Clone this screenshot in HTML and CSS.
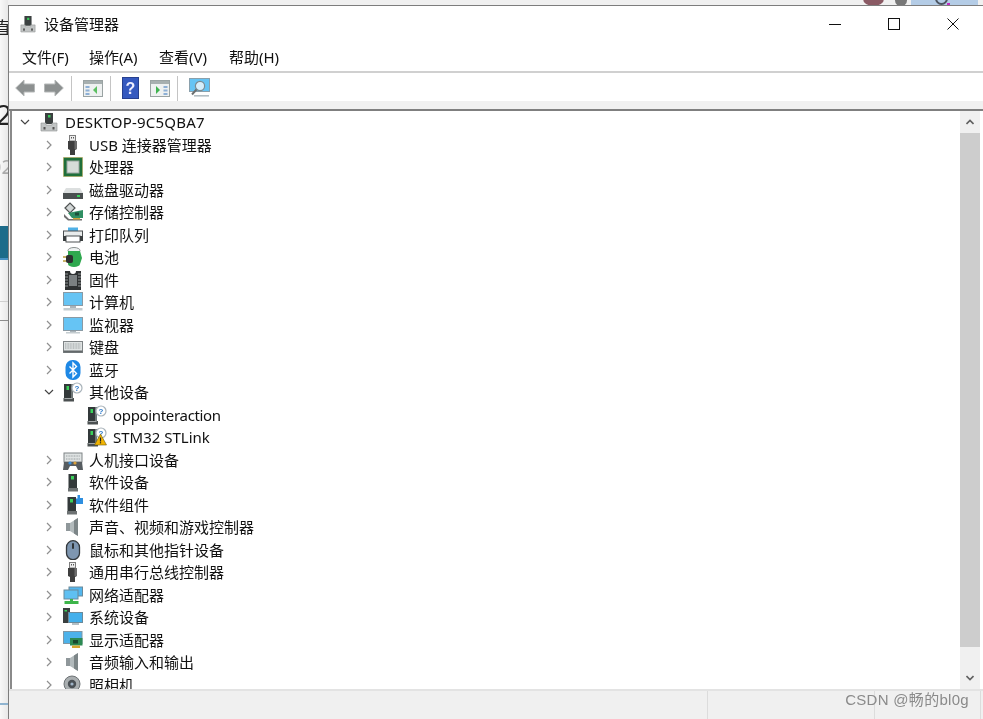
FILE: index.html
```html
<!DOCTYPE html>
<html lang="zh-CN">
<head>
<meta charset="utf-8">
<title>设备管理器</title>
<link rel="stylesheet" href="styles.css">
</head>
<body>
<svg class="defs" width="0" height="0" aria-hidden="true">
  <defs>
    <symbol id="i-tower" viewBox="0 0 20 20"><rect x="1" y="2" width="9" height="14" fill="#33393a"/><rect x="8" y="2" width="2" height="14" fill="#6e7677"/><rect x="3.5" y="4" width="2.5" height="4" fill="#3bd15a"/><rect x=".5" y="16" width="10.5" height="3.5" fill="#4b5051"/><rect x="1.5" y="16" width="8" height="1" fill="#a4a9aa"/></symbol>
    <symbol id="i-q" viewBox="0 0 20 20"><use href="#i-tower" width="20" height="20"/><circle cx="14" cy="6" r="5" fill="#fff" stroke="#a9b3ba" stroke-width="1.2"/><text x="14" y="9" font-size="8" font-weight="700" text-anchor="middle" fill="#2b78c9" font-family="Liberation Sans">?</text></symbol>
    <symbol id="i-usb" viewBox="0 0 20 20"><rect x="6.5" y="0.5" width="6" height="5.5" fill="#eee" stroke="#7d7d7d"/><rect x="8" y="2" width="1" height="1.5" fill="#555"/><rect x="10" y="2" width="1" height="1.5" fill="#555"/><path d="M5 6h9v8l-2 1v5H7v-5l-2-1z" fill="#3e3e3e"/><rect x="11.5" y="6" width="2.5" height="8" fill="#6c6c6c"/></symbol>
    <symbol id="i-speaker" viewBox="0 0 20 20"><rect x="3" y="6" width="4" height="8" fill="#8f979a"/><path d="M7 6l8-5v18l-8-5z" fill="#b2babc"/><path d="M11 3.5v13l4 2.5V1z" fill="#7d8688"/></symbol>
    <symbol id="i-monitor" viewBox="0 0 20 20"><rect x="0.5" y=".5" width="19" height="13" fill="#66c4f4" stroke="#8a9aa4"/><rect x="7" y="14" width="6" height="2" fill="#aab4ba"/><rect x="0.5" y="16" width="19" height="2.5" fill="#c4ccd0"/></symbol>
    <symbol id="i-root" viewBox="0 0 18 20"><rect x="5" y="1" width="8" height="11" fill="#3b4040"/><rect x="8" y="3" width="2.5" height="2.5" fill="#39c95a"/><path d="M1 11h5v2h6v-2h5v8H1z" fill="#c2c5c5" stroke="#8d9090" stroke-width=".6"/><rect x="3.5" y="15" width="2" height="2.5" fill="#555"/><rect x="12.5" y="15" width="2" height="2.5" fill="#555"/></symbol>
    <symbol id="c-r" viewBox="0 0 12 12"><path d="M4 2l4 4-4 4"/></symbol>
    <symbol id="c-d" viewBox="0 0 12 12"><path d="M2 4l4 4 4-4"/></symbol>
  </defs>
</svg>

<div class="backdrop">
  <span class="bg-char bg-char-a">直</span>
  <span class="bg-char bg-char-b">2</span>
  <span class="bg-char bg-char-c">02</span>
  <div class="bg-teal"></div>
  <div class="bg-rule bg-rule-a"></div>
  <div class="bg-rule bg-rule-b"></div>
  <div class="bg-rule bg-rule-c"></div>
  <div class="bg-avatar"></div>
  <div class="bg-dot"></div>
  <div class="bg-tile"></div>
  <div class="bg-ring"></div>
  <div class="bg-magenta"></div>
</div>

<main class="window">
  <header class="titlebar">
    <svg class="title-icon" viewBox="0 0 18 20"><use href="#i-root"/></svg>
    <span class="title-text">设备管理器</span>
    <div class="window-controls">
      <button class="win-btn" aria-label="最小化"><svg width="12" height="12" viewBox="0 0 12 12"><path d="M0 6.5h12" stroke="#111" fill="none"/></svg></button>
      <button class="win-btn" aria-label="最大化"><svg width="12" height="12" viewBox="0 0 12 12"><rect x=".5" y=".5" width="11" height="11" stroke="#111" fill="none"/></svg></button>
      <button class="win-btn" aria-label="关闭"><svg width="12" height="12" viewBox="0 0 12 12"><path d="M.5.5l11 11M11.5.5l-11 11" stroke="#111" fill="none"/></svg></button>
    </div>
  </header>

  <nav class="menubar">
    <span class="menu-item">文件(F)</span>
    <span class="menu-item">操作(A)</span>
    <span class="menu-item">查看(V)</span>
    <span class="menu-item">帮助(H)</span>
  </nav>

  <div class="toolbar">
    <svg class="tool tool-arrow" viewBox="0 0 20 18"><path d="M.7 9L9 1v4h10.5v8H9v4z" fill="#8c9090" stroke="#b5b8b8"/></svg>
    <svg class="tool tool-arrow tool-arrow-r" viewBox="0 0 20 18"><path d="M19.3 9L11 1v4H.5v8H11v4z" fill="#8c9090" stroke="#b5b8b8"/></svg>
    <span class="tool-sep"></span>
    <svg class="tool tool-pane" viewBox="0 0 20 17"><rect x=".5" y=".5" width="19" height="16" fill="#eef1f1" stroke="#9aa3a3"/><rect x="1" y="1" width="18" height="3" fill="#a7b0b0"/><rect x="2.5" y="6" width="4" height="2" fill="#8db0d6"/><rect x="2.5" y="9.5" width="4" height="2" fill="#8db0d6"/><rect x="2.5" y="13" width="4" height="2" fill="#8db0d6"/><path d="M14 6v8l-4-4z" fill="#5cc062"/></svg>
    <span class="tool-sep"></span>
    <svg class="tool tool-help" viewBox="0 0 17 22"><rect width="17" height="22" fill="#27408f"/><rect x="1" y="1" width="15" height="20" fill="#3559bf"/><text x="8.5" y="16.5" font-size="16" font-weight="700" text-anchor="middle" fill="#eef" font-family="Liberation Sans">?</text></svg>
    <svg class="tool tool-pane tool-pane-b" viewBox="0 0 20 17"><rect x=".5" y=".5" width="19" height="16" fill="#eef1f1" stroke="#9aa3a3"/><rect x="1" y="1" width="18" height="3" fill="#a7b0b0"/><rect x="13.5" y="6" width="4" height="2" fill="#8db0d6"/><rect x="13.5" y="9.5" width="4" height="2" fill="#8db0d6"/><rect x="13.5" y="13" width="4" height="2" fill="#8db0d6"/><path d="M6 6v8l4-4z" fill="#3fb34f"/></svg>
    <span class="tool-sep"></span>
    <svg class="tool tool-scan" viewBox="0 0 21 20"><rect x=".5" y=".5" width="20" height="13" fill="#66c4f4" stroke="#8aa0ac"/><circle cx="11" cy="8" r="4.6" fill="#d6eefb" stroke="#7d8b92" stroke-width="1.2"/><path d="M7.5 11.5L3 16.5" stroke="#6b6f70" stroke-width="2"/><rect x="5" y="17" width="15" height="1.6" fill="#b4bec3"/></svg>
  </div>
  <div class="toolbar-foot"></div>

  <div class="content">
    <ul class="tree">
      <li class="row lvl0"><svg class="chev chev-open"><use href="#c-d"/></svg><svg class="ico" viewBox="0 0 18 20"><use href="#i-root"/></svg><span class="label label-caps">DESKTOP-9C5QBA7</span></li>

      <li class="row lvl1"><svg class="chev"><use href="#c-r"/></svg><svg class="ico" viewBox="0 0 20 20"><use href="#i-usb"/></svg><span class="label">USB 连接器管理器</span></li>

      <li class="row lvl1"><svg class="chev"><use href="#c-r"/></svg><svg class="ico" viewBox="0 0 20 20"><rect x=".5" y=".5" width="19" height="19" fill="#1f6f3a" stroke="#b8a24a" stroke-dasharray="1 1"/><rect x="4" y="4" width="12" height="12" fill="#d6dcd8" stroke="#9aa5a0"/></svg><span class="label">处理器</span></li>

      <li class="row lvl1"><svg class="chev"><use href="#c-r"/></svg><svg class="ico" viewBox="0 0 20 20"><path d="M3 8h14l3 5H0z" fill="#dcdfdf"/><rect x="0" y="13" width="20" height="6" fill="#4a4f50"/><rect x="14" y="15" width="3" height="2" fill="#3bd15a"/></svg><span class="label">磁盘驱动器</span></li>

      <li class="row lvl1"><svg class="chev"><use href="#c-r"/></svg><svg class="ico" viewBox="0 0 20 20"><path d="M2 6l5-5 5 5-5 5z" fill="#d2d6d6" stroke="#4f5353" stroke-width="1.2"/><path d="M5 11l15-3v8H9z" fill="#2f8f63"/><rect x="12" y="10.5" width="4" height="3" fill="#1c4f3a"/><path d="M1 12l5 5h13v1.5H5L1 15z" fill="#6f6f6f"/><rect x="10" y="16" width="7" height="1.5" fill="#c9a63a"/></svg><span class="label">存储控制器</span></li>

      <li class="row lvl1"><svg class="chev"><use href="#c-r"/></svg><svg class="ico" viewBox="0 0 20 20"><rect x="5" y="2.5" width="10" height="4" fill="#4fb0e6"/><rect x="0.5" y="6" width="19" height="8" fill="#e9ecec" stroke="#4c5052"/><rect x="3" y="11" width="14" height="6" fill="#fff" stroke="#4c5052"/><rect x="0" y="11" width="3" height="5" fill="#3b3f40"/><rect x="17" y="11" width="3" height="5" fill="#3b3f40"/></svg><span class="label">打印队列</span></li>

      <li class="row lvl1"><svg class="chev"><use href="#c-r"/></svg><svg class="ico" viewBox="0 0 20 20"><ellipse cx="11" cy="3.5" rx="6" ry="3" fill="#eef2f2" stroke="#8a9090"/><path d="M5 4h12l2 7-2 6a6 3 0 0 1-12 0z" fill="#2fa84f"/><path d="M0 10h5M0 14h5" stroke="#b89a3a" stroke-width="1.5"/><rect x="3" y="8" width="7" height="8" rx="2" fill="#2c2f30"/></svg><span class="label">电池</span></li>

      <li class="row lvl1"><svg class="chev"><use href="#c-r"/></svg><svg class="ico" viewBox="0 0 20 20"><path d="M2 1h5a3 3 0 0 0 6 0h5v19H2z" fill="#2f3233"/><rect x="6" y="5" width="8" height="11" fill="#7b8082"/><path d="M2 4h3M2 7h3M2 10h3M2 13h3M2 16h3M15 4h3M15 7h3M15 10h3M15 13h3M15 16h3" stroke="#a8adae" stroke-width=".8"/></svg><span class="label">固件</span></li>

      <li class="row lvl1"><svg class="chev"><use href="#c-r"/></svg><svg class="ico" viewBox="0 0 20 20"><use href="#i-monitor"/></svg><span class="label">计算机</span></li>

      <li class="row lvl1"><svg class="chev"><use href="#c-r"/></svg><svg class="ico" viewBox="0 0 20 20"><rect x=".5" y="2.5" width="19" height="13" fill="#66c4f4" stroke="#8a9aa4"/><rect x="7" y="16" width="6" height="1" fill="#aab4ba"/><rect x="3" y="17" width="14" height="1.5" fill="#c4ccd0"/></svg><span class="label">监视器</span></li>

      <li class="row lvl1"><svg class="chev"><use href="#c-r"/></svg><svg class="ico" viewBox="0 0 20 20"><rect x=".5" y="4.5" width="19" height="11" fill="#dfe3e3" stroke="#7f8486"/><rect x=".5" y="13.5" width="19" height="2" fill="#63686a"/><path d="M2 7h16M2 9h16M2 11h16" stroke="#9aa0a2" stroke-dasharray="1 .6"/></svg><span class="label">键盘</span></li>

      <li class="row lvl1"><svg class="chev"><use href="#c-r"/></svg><svg class="ico" viewBox="0 0 20 20"><rect x="2.5" y="0" width="15" height="20" rx="7" fill="#1e88e5"/><path d="M6.5 6.5l7 7-3.5 3.5V3l3.5 3.5-7 7" fill="none" stroke="#fff" stroke-width="1.4"/></svg><span class="label">蓝牙</span></li>

      <li class="row lvl1"><svg class="chev chev-open"><use href="#c-d"/></svg><svg class="ico" viewBox="0 0 20 20"><use href="#i-q"/></svg><span class="label">其他设备</span></li>

      <li class="row lvl2"><span class="chev-gap"></span><svg class="ico" viewBox="0 0 20 20"><use href="#i-q"/></svg><span class="label label-lower">oppointeraction</span></li>

      <li class="row lvl2"><span class="chev-gap"></span><svg class="ico" viewBox="0 0 20 20"><use href="#i-q"/><path d="M13.5 7l6 11h-12z" fill="#f2b400" stroke="#6b5a10" stroke-width=".6"/><rect x="12.9" y="10.5" width="1.2" height="4" fill="#222"/><rect x="12.9" y="15.2" width="1.2" height="1.2" fill="#222"/></svg><span class="label">STM32 STLink</span></li>

      <li class="row lvl1"><svg class="chev"><use href="#c-r"/></svg><svg class="ico" viewBox="0 0 20 20"><rect x="1" y="3" width="18" height="9" fill="#dfe3e3" stroke="#7f8486"/><path d="M3 6h14M3 9h14" stroke="#9aa0a2" stroke-dasharray="1 .6"/><path d="M1 12h18l1 8h-5l-2-4H7l-2 4H0z" fill="#565c60"/><circle cx="7" cy="13" r="1.6" fill="#3b8fd8"/><circle cx="12" cy="13" r="1.6" fill="#d8a03b"/></svg><span class="label">人机接口设备</span></li>

      <li class="row lvl1"><svg class="chev"><use href="#c-r"/></svg><svg class="ico" viewBox="0 0 20 20"><rect x="5.5" y="2" width="8.5" height="14" fill="#33393a"/><rect x="8" y="4" width="3" height="3.5" fill="#3bd15a"/><rect x="5" y="16" width="10" height="3.5" fill="#6d7273"/></svg><span class="label">软件设备</span></li>

      <li class="row lvl1"><svg class="chev"><use href="#c-r"/></svg><svg class="ico" viewBox="0 0 20 20"><rect x="4.5" y="2" width="8.5" height="14" fill="#33393a"/><rect x="7" y="4" width="3" height="3.5" fill="#3bd15a"/><rect x="4" y="16" width="10" height="3.5" fill="#6d7273"/><path d="M14.5 0h2.5v3h3v6h-7V3.500h1.500z" fill="#2e8fe0"/></svg><span class="label">软件组件</span></li>

      <li class="row lvl1"><svg class="chev"><use href="#c-r"/></svg><svg class="ico" viewBox="0 0 20 20"><use href="#i-speaker"/></svg><span class="label">声音、视频和游戏控制器</span></li>

      <li class="row lvl1"><svg class="chev"><use href="#c-r"/></svg><svg class="ico" viewBox="0 0 20 20"><rect x="3.500" y="0.700" width="13" height="19" rx="6.500" fill="#7e96b0" stroke="#33383c" stroke-width="1.300"/><rect x="9" y="3" width="2" height="6" rx="1" fill="#2f3437"/></svg><span class="label">鼠标和其他指针设备</span></li>

      <li class="row lvl1"><svg class="chev"><use href="#c-r"/></svg><svg class="ico" viewBox="0 0 20 20"><use href="#i-usb"/></svg><span class="label">通用串行总线控制器</span></li>

      <li class="row lvl1"><svg class="chev"><use href="#c-r"/></svg><svg class="ico" viewBox="0 0 20 20"><rect x="6" y="2" width="13.500" height="9" fill="#52b6ee" stroke="#6b8a9a"/><rect x="1" y="5" width="14" height="9" fill="#5fc0f2" stroke="#6b8a9a"/><rect x="7" y="14" width="3" height="2" fill="#3db54a"/><rect x="1.500" y="16" width="14" height="3" fill="#3db54a"/></svg><span class="label">网络适配器</span></li>

      <li class="row lvl1"><svg class="chev"><use href="#c-r"/></svg><svg class="ico" viewBox="0 0 20 20"><rect x="0" y="1" width="7" height="15" fill="#3a3f3f"/><rect x="1.500" y="3" width="2.500" height="1.500" fill="#3bd15a"/><rect x="5.500" y="5.500" width="14" height="10" fill="#43b0ec" stroke="#6b8a9a"/><rect x="9" y="16" width="7" height="2" fill="#b4c0c6"/></svg><span class="label">系统设备</span></li>

      <li class="row lvl1"><svg class="chev"><use href="#c-r"/></svg><svg class="ico" viewBox="0 0 20 20"><rect x=".5" y="1.500" width="18.500" height="12" fill="#4cb2ea" stroke="#7f97a5"/><rect x="7" y="8" width="12.500" height="7.500" fill="#2c8a52"/><rect x="10" y="10" width="5" height="3.500" fill="#17482e"/><rect x="9" y="15.500" width="8" height="2.500" fill="#d4a62f"/></svg><span class="label">显示适配器</span></li>

      <li class="row lvl1"><svg class="chev"><use href="#c-r"/></svg><svg class="ico" viewBox="0 0 20 20"><use href="#i-speaker"/></svg><span class="label">音频输入和输出</span></li>

      <li class="row lvl1"><svg class="chev"><use href="#c-r"/></svg><svg class="ico" viewBox="0 0 20 20"><circle cx="9" cy="9" r="8" fill="#a9aeb0" stroke="#6d7275"/><circle cx="9" cy="9" r="4.200" fill="#4a5055"/><circle cx="9" cy="9" r="1.600" fill="#9fb4c8"/></svg><span class="label">照相机</span></li>
    </ul>

    <div class="scrollbar">
      <button class="sb-btn" aria-label="上"><svg width="8" height="6" viewBox="0 0 8 6"><path d="M.5 5L4 1.500 7.500 5" fill="none" stroke="#606060" stroke-width="1.600"/></svg></button>
      <div class="sb-track"><div class="sb-thumb"></div></div>
      <button class="sb-btn" aria-label="下"><svg width="8" height="6" viewBox="0 0 8 6"><path d="M.5 1L4 4.500 7.500 1" fill="none" stroke="#606060" stroke-width="1.600"/></svg></button>
    </div>
  </div>

  <footer class="statusbar">
    <span class="status-cell status-main"></span>
    <span class="status-cell status-mid"></span>
    <span class="status-cell status-end"></span>
    <span class="watermark">CSDN @畅的bl0g</span>
  </footer>
</main>
</body>
</html>
```
FILE: styles.css
```css
* { box-sizing: border-box; }
html, body { margin: 0; height: 100%; }
body {
  position: relative;
  width: 983px;
  height: 719px;
  overflow: hidden;
  background: #f4f4f4;
  font-family: "Noto Sans", "Noto Sans CJK SC", sans-serif;
  font-size: 15px;
  color: #111;
}
.defs { position: absolute; }

/* desktop behind the window */
.backdrop {
  position: absolute;
  inset: 0;
  filter: blur(.4px);
  background: linear-gradient(to right, #f8f8f8, #e8e8e8 8px, #f0f0f0 8px);
}
.bg-char { position: absolute; color: #222; line-height: 1; }
.bg-char-a { left: -6px; top: 19px; font-size: 17px; }
.bg-char-b { left: -4px; top: 100px; font-size: 28px; }
.bg-char-c { left: -10px; top: 157px; font-size: 20px; color: #aaa; }
.bg-teal { position: absolute; left: 0; top: 226px; width: 9px; height: 34px; background: #1d6c8a; border-bottom: 2px solid #4a93c4; }
.bg-rule { position: absolute; left: 0; width: 9px; height: 1px; background: #cfcfcf; }
.bg-rule-a { top: 301px; }
.bg-rule-b { top: 320px; background: #8c8c8c; }
.bg-rule-c { top: 703px; height: 2px; background: #8fb4d0; }
.bg-avatar { position: absolute; left: 863px; top: -8px; width: 21px; height: 14px; border-radius: 50%; background: #8a5a64; }
.bg-dot { position: absolute; left: 895px; top: -5px; width: 12px; height: 11px; border-radius: 50%; background: #777; }
.bg-tile { position: absolute; left: 911px; top: 0; width: 67px; height: 5px; background: #b4cce6; }
.bg-ring { position: absolute; left: 935px; top: -8px; width: 13px; height: 13px; border-radius: 50%; border: 2px solid #4d5560; }
.bg-magenta { position: absolute; left: 947px; top: 3px; width: 3px; height: 2px; background: #c02ac0; }

/* window */
.window {
  position: absolute;
  left: 8px;
  top: 5px;
  width: 975px;
  height: 714px;
  display: flex;
  flex-direction: column;
  background: #fff;
  border-left: 1px solid #7d7d7d;
  border-top: 1px solid #7d7d7d;
  filter: blur(.4px);
}
.titlebar {
  height: 36px;
  flex: none;
  display: flex;
  align-items: center;
  padding-left: 11px;
}
.title-icon { width: 16px; height: 18px; margin-right: 8px; }
.title-text { font-size: 15px; line-height: 20px; }
.window-controls { margin-left: auto; display: flex; margin-right: 1px; }
.win-btn {
  width: 59px;
  height: 36px;
  padding: 0;
  border: 0;
  background: none;
  display: flex;
  align-items: center;
  justify-content: center;
}

.menubar {
  height: 31px;
  flex: none;
  display: flex;
  gap: 20px;
  align-items: center;
  padding-left: 13px;
  border-bottom: 2px solid #d0d0d0;
}
.menu-item { width: 50px; font-size: 15px; line-height: 20px; white-space: nowrap; }
.menu-item:first-child { width: 47px; }

.toolbar {
  height: 28px;
  flex: none;
  display: flex;
  align-items: center;
  padding: 2px 0 0 6px;
}
.tool { flex: none; display: block; }
.tool-arrow { width: 20px; height: 18px; }
.tool-arrow-r { margin-left: 9px; }
.tool-sep { width: 1px; height: 25px; background: #c4c4c4; margin: 0 11px 0 7px; flex: none; }
.tool-pane { width: 20px; height: 17px; }
.tool-help { width: 17px; height: 22px; margin-bottom: 1px; }
.tool-pane-b { margin-left: 11px; }
.tool-scan { width: 21px; height: 20px; }
.toolbar-foot {
  height: 10px;
  flex: none;
  background: #f0f0f0;
  border-bottom: 2px solid #7f7f7f;
}

/* tree */
.content {
  height: 578px;
  flex: none;
  display: flex;
  overflow: hidden;
  padding-left: 1px;
  background: #f0f0f0;
}
.tree {
  flex: 1;
  min-width: 0;
  list-style: none;
  margin: 0;
  padding: 0;
  overflow: hidden;
  background: #fff;
  border-left: 2px solid #8a8a8a;
}
.row {
  height: 22.5px;
  display: flex;
  align-items: center;
  white-space: nowrap;
}
.lvl0 { padding-left: 7px; }
.lvl1 { padding-left: 31px; }
.lvl2 { padding-left: 55px; }
.chev, .chev-gap { width: 12px; height: 12px; flex: none; }
.chev { fill: none; stroke: #8f8f8f; stroke-width: 1.2; }
.chev-open { stroke: #444; }
.ico { width: 20px; height: 20px; flex: none; margin: 0 6px 0 8px; }
.label { font-size: 15px; line-height: 20px; }
.label-caps { letter-spacing: .2px; }
.label-lower { letter-spacing: -.33px; }

/* scrollbar */
.scrollbar {
  width: 20px;
  flex: none;
  display: flex;
  flex-direction: column;
  background: #f0f0f0;
  margin-right: 3px;
  box-shadow: 3px 0 0 #fff;
}
.sb-btn {
  height: 22px;
  flex: none;
  padding: 0;
  border: 0;
  background: none;
  display: flex;
  align-items: center;
  justify-content: center;
}
.sb-track { flex: 1; min-height: 0; }
.sb-thumb { height: 514px; background: #cdcdcd; }

/* status bar */
.statusbar {
  flex: 1;
  position: relative;
  display: flex;
  background: #f0f0f0;
  border-top: 2px solid #e3e3e3;
}
.status-cell { border-right: 1px solid #dcdcdc; flex: none; }
.status-main { width: 699px; }
.status-mid { width: 167px; }
.status-end { width: 106px; }
.watermark {
  position: absolute;
  right: 14px;
  top: -1px;
  font-family: "Liberation Sans", "Noto Sans CJK SC", sans-serif;
  font-size: 15px;
  line-height: 20px;
  color: #8a8a8a;
  letter-spacing: .3px;
}
```
